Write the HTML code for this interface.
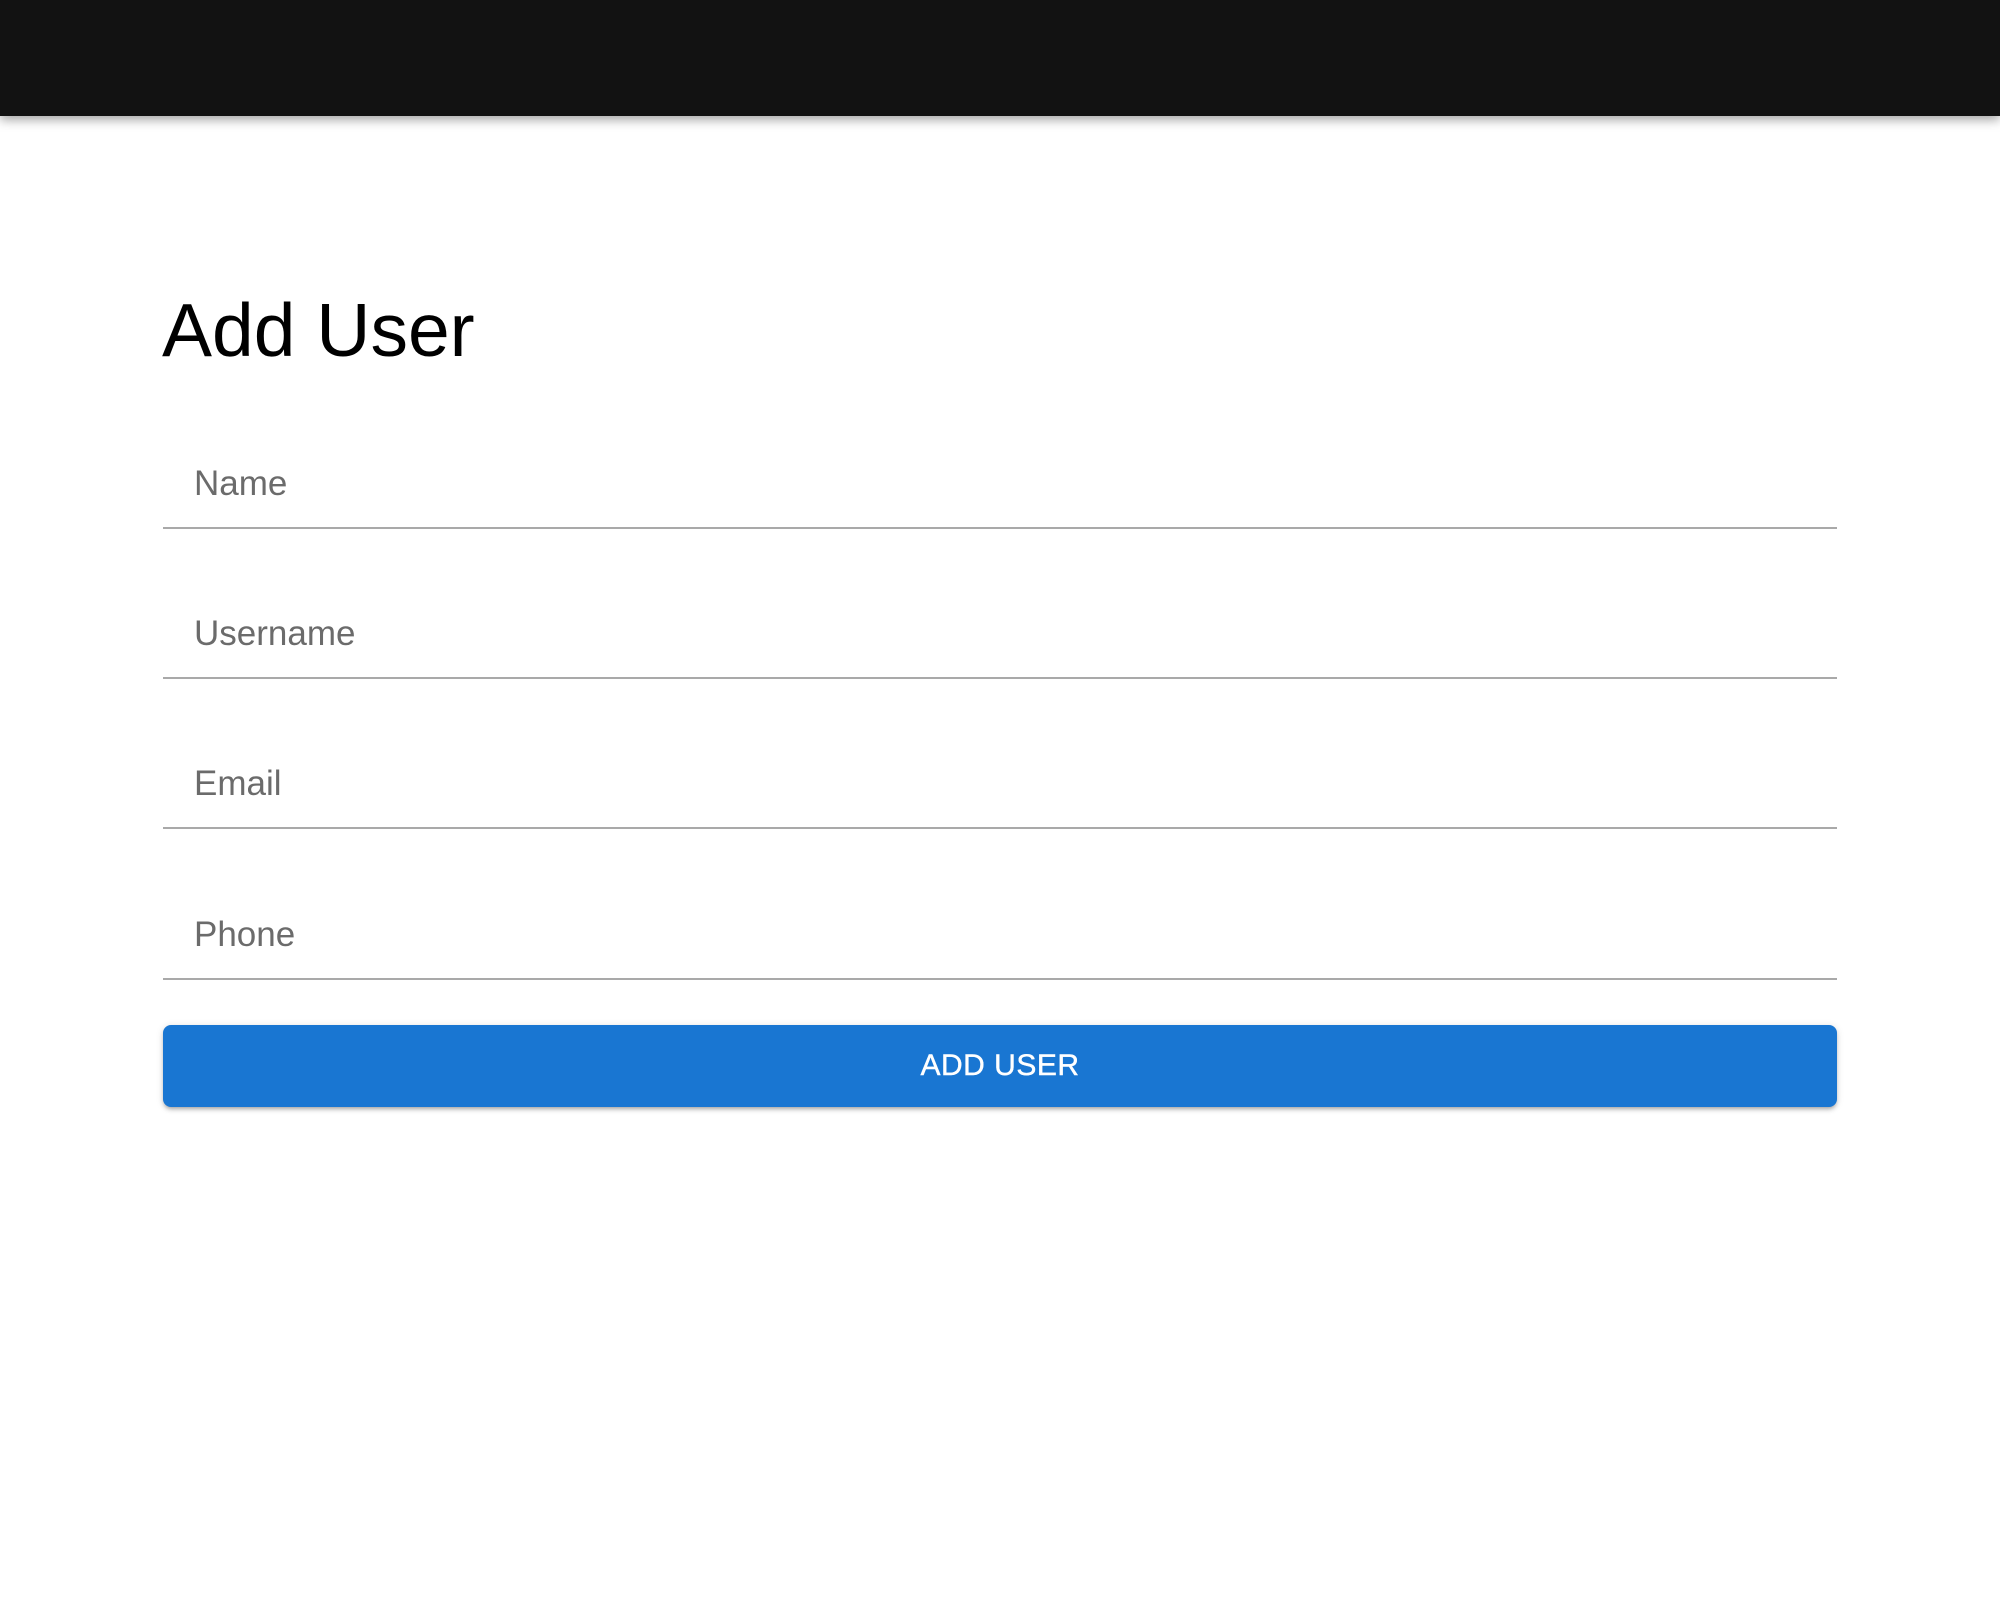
<!DOCTYPE html>
<html><head><meta charset="utf-8"><style>
*{margin:0;padding:0;box-sizing:border-box}
body{width:2000px;height:1600px;background:#fff;font-family:"Liberation Sans",Arial,sans-serif;position:relative;overflow:hidden}
.bar{position:absolute;left:0;top:0;width:2000px;height:116px;background:#121212;box-shadow:0 4px 10px rgba(0,0,0,0.35)}
h1{position:absolute;left:162px;top:285px;font-size:75px;font-weight:400;line-height:90px;color:#000}
.f{position:absolute;left:163px;width:1674px;height:2px;background:#a9a9a9}
.l{position:absolute;left:194px;font-size:35px;color:#6b6b6b;line-height:40px}
.btn{position:absolute;left:163px;top:1025px;width:1674px;height:82px;background:#1976d2;border-radius:8px;box-shadow:0 3px 3px -2px rgba(0,0,0,.2),0 3px 4px rgba(0,0,0,.14),0 1px 8px rgba(0,0,0,.12);color:#fff;font-size:30px;font-weight:400;letter-spacing:0.5px;text-align:center;line-height:82px;-webkit-text-stroke:0.4px #fff}
</style></head><body>
<div class="bar"></div>
<h1>Add User</h1>
<div class="l" style="top:464px">Name</div><div class="f" style="top:527px"></div>
<div class="l" style="top:614px">Username</div><div class="f" style="top:677px"></div>
<div class="l" style="top:764px">Email</div><div class="f" style="top:827px"></div>
<div class="l" style="top:915px">Phone</div><div class="f" style="top:978px"></div>
<div class="btn">ADD USER</div>
</body></html>
